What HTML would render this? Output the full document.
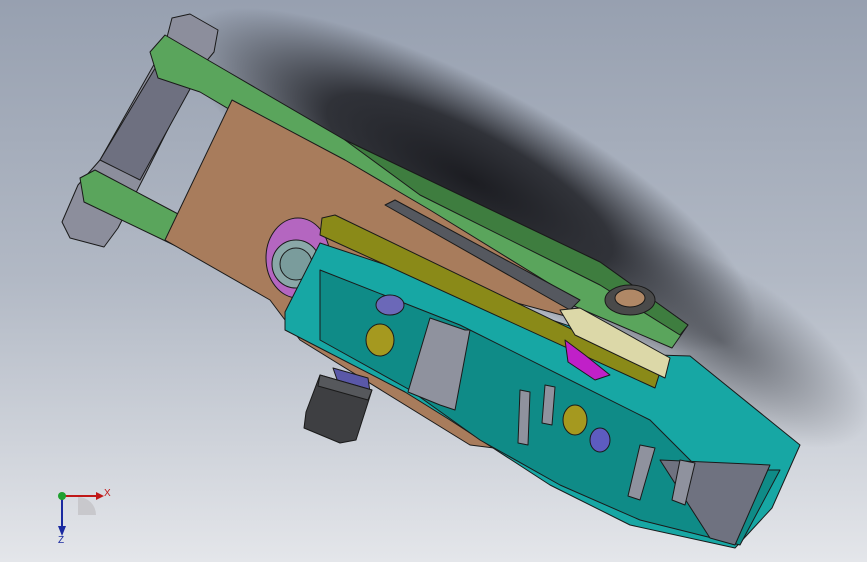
<!DOCTYPE html>
<html><head><meta charset="utf-8"><style>
html,body{margin:0;padding:0;width:867px;height:562px;overflow:hidden}
</style></head><body>
<svg width="867" height="562" viewBox="0 0 867 562" xmlns="http://www.w3.org/2000/svg">
<defs>
<linearGradient id="bg" x1="0" y1="0" x2="0" y2="1">
<stop offset="0" stop-color="#97a0b0"/><stop offset="0.5" stop-color="#b2b9c5"/><stop offset="1" stop-color="#e4e6ea"/>
</linearGradient>
<radialGradient id="sh">
<stop offset="0" stop-color="#1c1d22" stop-opacity="1"/>
<stop offset="0.5" stop-color="#1c1d22" stop-opacity="0.85"/>
<stop offset="1" stop-color="#1c1d22" stop-opacity="0"/>
</radialGradient>
<radialGradient id="sh2">
<stop offset="0" stop-color="#2a2c32" stop-opacity="0.6"/>
<stop offset="1" stop-color="#2a2c32" stop-opacity="0"/>
</radialGradient>
</defs>
<rect width="867" height="562" fill="url(#bg)"/>
<ellipse cx="0" cy="0" rx="170" ry="70" fill="url(#sh2)" transform="translate(720,340) rotate(32)"/>
<ellipse cx="0" cy="0" rx="320" ry="95" fill="url(#sh)" transform="translate(470,180) rotate(28)"/>
<g stroke="#1a1a1a" stroke-width="1" stroke-linejoin="round">
<polygon points="62,222 78,185 100,160 165,45 172,18 190,14 218,30 214,52 195,75 145,175 118,228 104,247 70,238" fill="#8c8e9c"/>
<polygon points="100,160 160,60 195,80 140,180" fill="#6e7080"/>
<polygon points="150,52 165,35 225,70 345,140 600,262 688,325 672,348 560,300 420,222 200,92 158,78" fill="#5aa55c"/>
<polygon points="345,140 600,262 688,325 680,335 600,285 420,195" fill="#3e7d3f"/>
<polygon points="80,178 95,170 180,215 232,238 180,248 84,202" fill="#5aa55c"/>
<polygon points="165,240 232,100 345,160 430,210 560,290 580,320 320,250 300,305 510,450 470,445 300,340 270,300" fill="#a87c5c"/>
<ellipse cx="298" cy="258" rx="32" ry="40" fill="#b466c0"/>
<circle cx="296" cy="264" r="24" fill="#8aa8a8"/>
<circle cx="296" cy="264" r="16" fill="#7a9c9c"/>
<polygon points="385,205 395,200 580,300 570,310" fill="#55585f"/>
<polygon points="285,312 320,243 657,355 690,356 800,445 772,508 735,548 630,525 550,485 450,420 405,392 285,330" fill="#17a7a4"/>
<polygon points="320,270 460,325 650,420 700,470 780,470 740,545 640,520 560,485 480,440 410,390 320,340" fill="#0f8b87"/>
<polygon points="660,460 770,465 735,545 710,538" fill="#6f7280"/>
<polygon points="322,218 335,215 660,372 655,388 320,235" fill="#8a8a18"/>
<polygon points="560,310 580,308 670,358 665,378 575,335" fill="#dcd8a8"/>
<ellipse cx="630" cy="300" rx="25" ry="15" fill="#4a4a4a"/>
<ellipse cx="630" cy="298" rx="15" ry="9" fill="#b08866"/>
<polygon points="430,318 465,330 470,330 455,410 440,405 408,392" fill="#8f929e"/>
<ellipse cx="380" cy="340" rx="14" ry="16" fill="#a5991f"/>
<ellipse cx="575" cy="420" rx="12" ry="15" fill="#a5991f"/>
<ellipse cx="390" cy="305" rx="14" ry="10" fill="#6b68b8"/>
<ellipse cx="600" cy="440" rx="10" ry="12" fill="#5d5cc0"/>
<polygon points="520,390 530,392 528,445 518,443" fill="#8f929e"/>
<polygon points="640,445 655,448 640,500 628,496" fill="#8f929e"/>
<polygon points="680,460 695,463 685,505 672,500" fill="#8f929e"/>
<polygon points="545,385 555,387 552,425 542,423" fill="#8f929e"/>
<polygon points="565,340 585,355 610,375 595,380 568,362" fill="#c020c8"/>
<polygon points="333,368 368,378 370,392 340,388" fill="#5a58a8"/>
<polygon points="306,412 320,375 372,390 356,440 340,443 304,428" fill="#3e3f42"/>
<polygon points="320,375 372,390 368,400 318,386" fill="#56585c"/>
</g>
<g>
<path d="M78 497 A18 18 0 0 1 96 515 L78 515 Z" fill="#c8c8cc"/>
<line x1="62" y1="496" x2="96" y2="496" stroke="#c01818" stroke-width="2"/>
<polygon points="96,492 104,496 96,500" fill="#c01818"/>
<line x1="62" y1="496" x2="62" y2="528" stroke="#1a2aa0" stroke-width="2"/>
<polygon points="58,526 62,536 66,526" fill="#1a2aa0"/>
<circle cx="62" cy="496" r="4" fill="#20a030"/>
<text x="104" y="496" font-family="Liberation Sans,sans-serif" font-size="10" fill="#c01818">X</text>
<text x="58" y="543" font-family="Liberation Sans,sans-serif" font-size="10" fill="#1a2aa0">Z</text>
</g>
</svg>
</body></html>
